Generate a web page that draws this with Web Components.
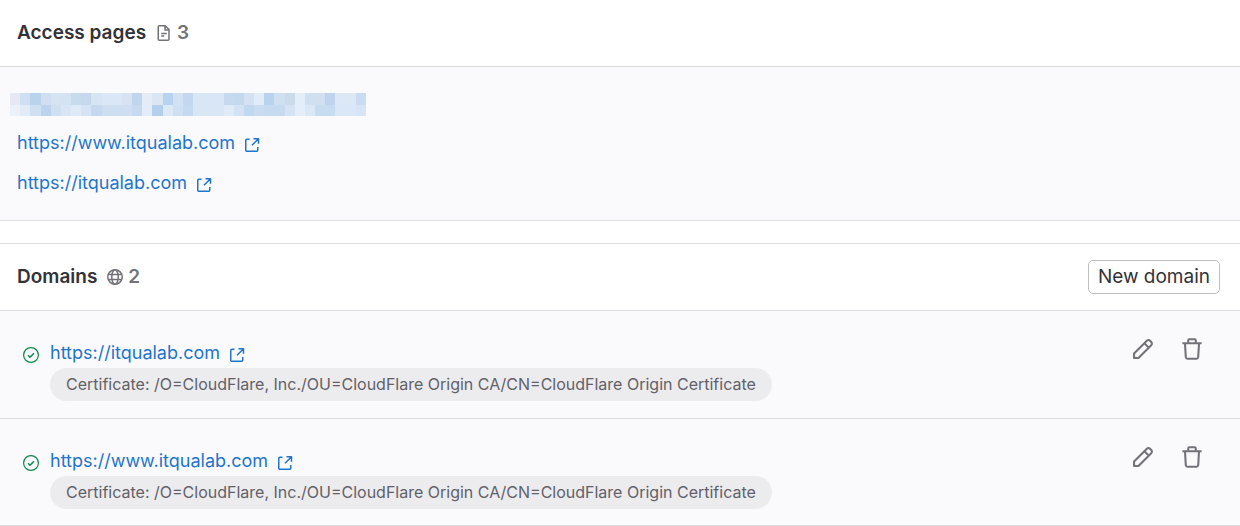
<!DOCTYPE html>
<html lang="en">
<head>
<meta charset="utf-8">
<title>Pages</title>
<style>
html { background: #fff; }
body { margin: 0; font-family: Inter, "Liberation Sans", sans-serif; font-size: 19px; line-height: 24px; color: #333238; }
</style>
</head>
<body>
<pages-settings></pages-settings>
<script>
const ICONS = {
  doc: '<path d="M3.250 .75h6l3.750 3.750v9.750a1 1 0 0 1-1 1h-8.750a1 1 0 0 1-1-1V1.750a1 1 0 0 1 1-1zM9 1v4h4M5.250 8.500h5.500M5.250 11h3"/>',
  globe: '<circle cx="8" cy="8" r="7.250"/><ellipse cx="8" cy="8" rx="3.250" ry="7.250"/><path d="M1.500 5.500h13M1.500 10.500h13"/>',
  external: '<path d="M5.500 2.250H3a1.250 1.250 0 0 0-1.250 1.250v9.500A1.250 1.250 0 0 0 3 14.250h9.500a1.250 1.250 0 0 0 1.250-1.250v-3M9.500 1.750h5v5M14.250 2L8 8.250"/>',
  check: '<circle cx="8" cy="8" r="7.400" stroke-width="1.200"/><path d="M5 8.250l2 2 4-4"/>',
  pencil: '<path d="M1.500 14.500v-3.200l9.300-9.300a1.600 1.600 0 0 1 2.300 0l.9.900a1.600 1.600 0 0 1 0 2.300l-9.300 9.300zM9 3.800l3.200 3.200"/>',
  trash: '<path d="M1 3.750h14M5.250 3.500V1.750a.8.8 0 0 1 .8-.8h3.900a.8.8 0 0 1 .8.8V3.500M2.900 4l.6 10a1.200 1.200 0 0 0 1.200 1.100h6.600a1.200 1.200 0 0 0 1.200-1.100l.6-10"/>'
};

function define(name, css, html, setup) {
  const template = document.createElement('template');
  template.innerHTML = `<style>${css}</style>${html}`;
  customElements.define(name, class extends HTMLElement {
    connectedCallback() {
      if (this.shadowRoot) return;
      const content = template.content.cloneNode(true);
      if (setup) setup(this, content);
      this.attachShadow({ mode: 'open' }).append(content);
    }
  });
}

define('ui-icon', `
  :host { display: block; flex: none; width: 16px; height: 16px; }
  :host([size="large"]) { width: 22px; height: 22px; }
  svg { display: block; width: 100%; height: 100%; fill: none; stroke: currentColor; stroke-width: 1.500; stroke-linejoin: round; }
`, '<svg viewBox="0 0 16 16" aria-hidden="true"></svg>', (host, root) => {
  root.querySelector('svg').innerHTML = ICONS[host.getAttribute('name')];
});

define('external-link', `
  :host { display: flex; font-size: 18px; }
  a { display: flex; align-items: center; gap: 9px; color: #1f75cb; text-decoration: none; }
  a:hover { text-decoration: underline; }
  ui-icon { margin-top: 4px; }
`, '<a><span></span><ui-icon name="external"></ui-icon></a>', (host, root) => {
  const href = host.getAttribute('href');
  root.querySelector('a').href = href;
  root.querySelector('span').textContent = href;
});

define('redacted-address', `
  :host { display: block; width: 356px; height: 23px; }
  svg { display: block; width: 100%; height: 100%; }
`, '<svg viewBox="0 0 35 2" preserveAspectRatio="none" shape-rendering="crispEdges" role="img" aria-label="Hidden address"></svg>', (host, root) => {
  const rows = [
    'e6e9f4 cfe0f3 b9d3ed cfdff1 d6e3f3 d4e3f4 c6dbec c5d8ed d6e5f4 dbe7f6 dae7f5 d7e3f3 c0d5ee e5ecf7 dbe6f4 b8d3f0 d3e2f3 c3d8ef d9e6f5 d9e6f5 d9e6f5 c6d9ee c4d9ee d3e1f3 e1ecf9 b9d3ee cddff1 cbdbea e3eefa d1e0f1 d1e0f1 c0d3ee dde8f6 dde8f6 cadcf1',
    'ebf1f9 e0ebf7 cfe0f3 bdd2ec cfe0f3 d7e5f5 deeaf8 d5e3f4 c5d8ee cddef1 cddef1 cfdff1 c8daf0 e3edf9 b3cfec dceaf8 cfe0f3 c5d9f0 d9e6f5 d9e6f5 d9e6f5 dfebf9 d3e2f4 c0d9ef cbdcf1 c6dbf0 c6dbf0 d5e3f4 e3eefa dae7f6 c7dbf1 c7dbf1 dae7f6 dae7f6 d6e4f5'
  ];
  root.querySelector('svg').innerHTML = rows.map((row, y) =>
    row.split(' ').map((c, x) => `<rect x="${x}" y="${y}" width="1" height="1" fill="#${c}"/>`).join('')).join('');
});

define('settings-card', `
  :host { display: block; border-bottom: 1px solid #dcdcde; }
  header { display: flex; align-items: center; justify-content: space-between; height: 66px; padding: 0 20px 0 17px; border-bottom: 1px solid #dcdcde; }
  .title { display: flex; align-items: center; gap: 10px; }
  h2 { margin: 0; font: inherit; font-weight: 600; }
  .count { display: flex; align-items: center; gap: 5px; color: #737278; font-weight: 600; }
  .body { background: #fafafd; }
`, '<section><header><div class="title"><h2></h2><span class="count"><ui-icon></ui-icon><span class="number"></span></span></div><slot name="action"></slot></header><div class="body"><slot></slot></div></section>', (host, root) => {
  root.querySelector('h2').textContent = host.getAttribute('heading');
  root.querySelector('.number').textContent = host.getAttribute('count');
  root.querySelector('ui-icon').setAttribute('name', host.getAttribute('icon'));
});

define('outline-button', `
  :host { display: block; }
  button { display: block; height: 34px; padding: 0 9px; border: 1px solid #bfbfc3; border-radius: 5px; background: #fff; color: #333238; font: inherit; }
`, '<button type="button"><slot></slot></button>');

define('icon-button', `
  :host { display: block; }
  button { display: block; padding: 0; border: 0; background: none; color: #737278; }
`, '<button type="button"><ui-icon size="large"></ui-icon></button>', (host, root) => {
  root.querySelector('button').setAttribute('aria-label', host.getAttribute('label'));
  root.querySelector('ui-icon').setAttribute('name', host.getAttribute('icon'));
});

define('domain-row', `
  :host { display: flex; align-items: flex-start; gap: 11px; padding: 30px 37px 16px 23px; }
  :host(:not(:last-of-type)) { padding-bottom: 17px; border-bottom: 1px solid #dcdcde; }
  .status { color: #108548; margin-top: 6px; }
  .details { flex: 1; min-width: 0; display: flex; flex-direction: column; align-items: flex-start; gap: 3px; }
  .badge { padding: 4px 16px 5px; border-radius: 17px; background: #ececef; color: #626168; font-size: 16px; }
  .actions { display: flex; gap: 27px; margin-top: -3px; }
`, `<ui-icon class="status" name="check"></ui-icon>
  <div class="details"><external-link></external-link><span class="badge"><slot></slot></span></div>
  <div class="actions"><icon-button icon="pencil" label="Edit"></icon-button><icon-button icon="trash" label="Remove"></icon-button></div>`, (host, root) => {
  root.querySelector('external-link').setAttribute('href', host.getAttribute('href'));
});

define('pages-settings', `
  :host { display: flex; flex-direction: column; gap: 22px; }
  .links { display: flex; flex-direction: column; gap: 16px; padding: 26px 17px 25px; }
  redacted-address { margin: 0 0 -1px -7px; }
  .domains { border-top: 1px solid #dcdcde; }
`, `<settings-card heading="Access pages" icon="doc" count="3">
    <div class="links">
      <redacted-address></redacted-address>
      <external-link href="https://www.itqualab.com"></external-link>
      <external-link href="https://itqualab.com"></external-link>
    </div>
  </settings-card>
  <settings-card class="domains" heading="Domains" icon="globe" count="2">
    <outline-button slot="action">New domain</outline-button>
    <domain-row href="https://itqualab.com">Certificate: /O=CloudFlare, Inc./OU=CloudFlare Origin CA/CN=CloudFlare Origin Certificate</domain-row>
    <domain-row href="https://www.itqualab.com">Certificate: /O=CloudFlare, Inc./OU=CloudFlare Origin CA/CN=CloudFlare Origin Certificate</domain-row>
  </settings-card>`);
</script>
</body>
</html>
